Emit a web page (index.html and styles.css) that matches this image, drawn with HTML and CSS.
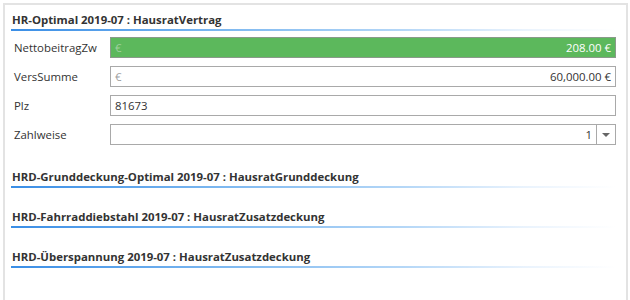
FILE: index.html
```html
<!DOCTYPE html>
<html lang="de">
<head>
    <meta charset="UTF-8">
    <title>HausratVertrag</title>
    <link rel="stylesheet" href="styles.css">
</head>
<body>
    <div class="panel">
        <section class="group">
            <h2 class="group-title">HR-Optimal 2019-07 : HausratVertrag</h2>
            <div class="form">
                <div class="row">
                    <label>NettobeitragZw</label>
                    <div class="field field-calc">
                        <span class="unit">€</span>
                        <span class="value">208.00 €</span>
                    </div>
                </div>
                <div class="row">
                    <label>VersSumme</label>
                    <div class="field">
                        <span class="unit">€</span>
                        <span class="value">60,000.00 €</span>
                    </div>
                </div>
                <div class="row">
                    <label>Plz</label>
                    <div class="field">
                        <span class="text">81673</span>
                    </div>
                </div>
                <div class="row">
                    <label>Zahlweise</label>
                    <div class="combo">
                        <div class="field">
                            <span class="value">1</span>
                        </div>
                        <div class="combo-btn"><span class="arrow"></span></div>
                    </div>
                </div>
            </div>
        </section>

        <section class="group">
            <h2 class="group-title">HRD-Grunddeckung-Optimal 2019-07 : HausratGrunddeckung</h2>
        </section>

        <section class="group">
            <h2 class="group-title">HRD-Fahrraddiebstahl 2019-07 : HausratZusatzdeckung</h2>
        </section>

        <section class="group">
            <h2 class="group-title">HRD-Überspannung 2019-07 : HausratZusatzdeckung</h2>
        </section>
    </div>
</body>
</html>
```

FILE: styles.css
```css
:root {
    --text-color: #333333;
    --border-color: #a9a9a9;
    --accent-color: #3a8ee6;
    --green-color: #5cb85c;
}

body {
    margin: 0;
    font-family: 'Open Sans', 'Noto Sans', sans-serif;
    font-size: 11.4px;
    color: var(--text-color);
    background-color: #ffffff;
}

.panel {
    margin: 3px 2px 0 3px;
    height: 297px;
    border: 2px solid #e3e3e3;
    border-bottom: none;
    box-sizing: border-box;
    padding: 6px 10px 0 6px;
}

.group {
    margin-bottom: 20px;
}

.group:first-child {
    margin-bottom: 19px;
}

.group-title {
    margin: 0;
    font-size: 11.4px;
    font-weight: 700;
    line-height: 17px;
    padding: 0 0 3px 1px;
    position: relative;
}

.group-title::after {
    content: "";
    position: absolute;
    left: 0;
    right: 0;
    bottom: 0;
    height: 2px;
    background: linear-gradient(to right, #3a8ee6 0%, #7db8f0 35%, #b5d7f7 65%, rgba(225, 238, 252, 0.7) 85%, rgba(255, 255, 255, 0) 100%);
}

.form {
    padding: 6px 0 4px 3px;
    display: flex;
    flex-direction: column;
    gap: 8px;
}

.row {
    display: flex;
    align-items: center;
    height: 21px;
}

.row label {
    width: 96px;
    flex-shrink: 0;
}

.field {
    flex: 1;
    height: 21px;
    box-sizing: border-box;
    border: 1px solid var(--border-color);
    display: flex;
    align-items: center;
    padding: 0 4px 0 4px;
    background-color: #ffffff;
}

.field .unit {
    color: #a0a0a0;
}

.field .value {
    margin-left: auto;
}

.field-calc {
    background-color: var(--green-color);
    border-color: #8a9a8a;
    color: #ffffff;
}

.field-calc .unit {
    color: #9fd09f;
}

.combo {
    flex: 1;
    display: flex;
    height: 21px;
}

.combo-btn {
    width: 19px;
    height: 21px;
    box-sizing: border-box;
    border: 1px solid var(--border-color);
    border-left: none;
    display: flex;
    align-items: center;
    justify-content: center;
}

.arrow {
    width: 0;
    height: 0;
    border-left: 4px solid transparent;
    border-right: 4px solid transparent;
    border-top: 4px solid #666666;
}
```
